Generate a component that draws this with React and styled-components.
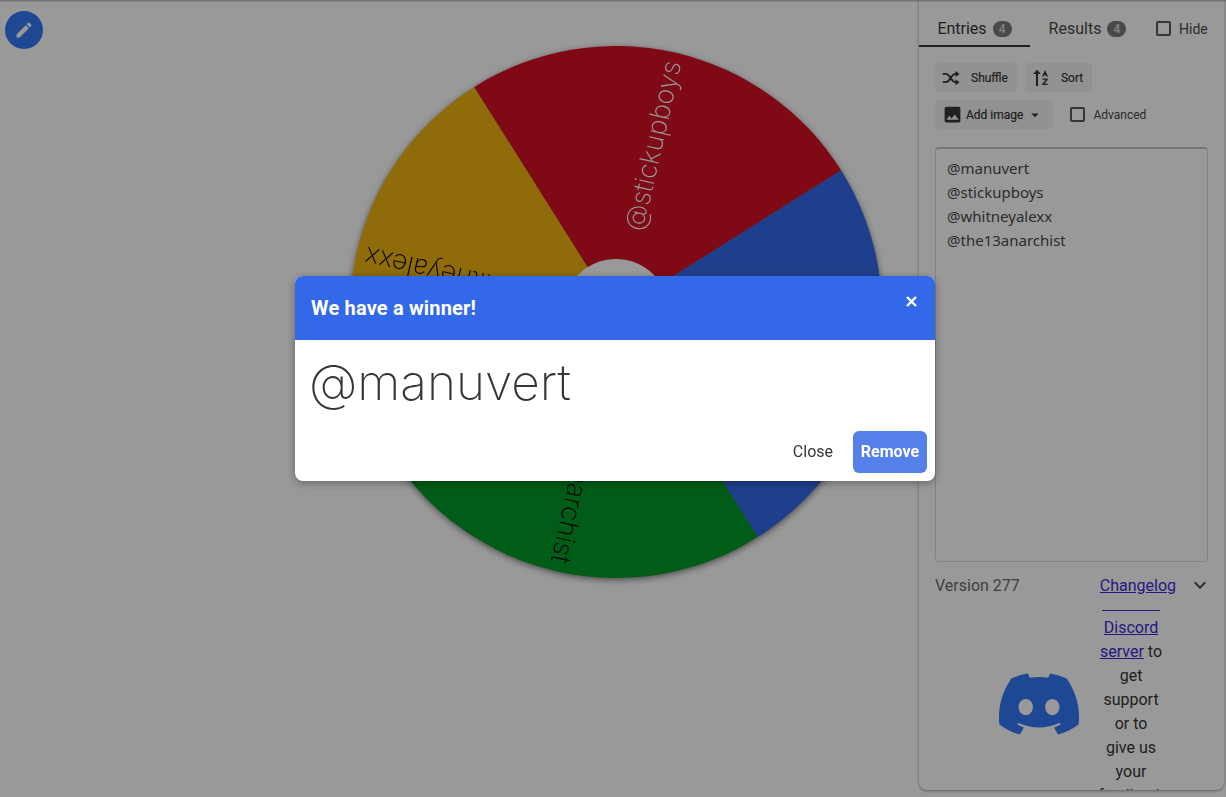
import React from 'react';
import styled, { createGlobalStyle } from 'styled-components';
import { MdArrowDropDown, MdEdit, MdExpandMore, MdImage } from 'react-icons/md';
import { SiDiscord } from 'react-icons/si';

const GlobalStyle = createGlobalStyle`
  html, body {
    margin: 0;
    height: 100%;
    overflow: hidden;
    background: #fff;
    font-family: Roboto, "Liberation Sans", sans-serif;
    color: #363636;
  }
`;

const Page = styled.div`
  display: flex;
  width: 1226px;
  height: 797px;
  overflow: hidden;
  box-shadow: inset 0 2px 2px -1px rgba(0, 0, 0, 0.35);
`;

const WheelArea = styled.main`
  display: flex;
  align-items: flex-start;
  width: 919px;
  padding: 11px 0 0 5px;
  box-sizing: border-box;
`;

const EditButton = styled.button`
  display: flex;
  align-items: center;
  justify-content: center;
  width: 38px;
  height: 38px;
  padding: 0;
  border: 0;
  border-radius: 50%;
  background: #3378f5;
  color: #fff;
  font-size: 20px;
`;

const WheelSvg = styled.svg`
  display: block;
  margin: 35px 0 0 307px;
  overflow: visible;
  filter: drop-shadow(0 2px 3px rgba(0, 0, 0, 0.5));
`;

const SliceLabel = styled.text`
  font-family: Inter, Lato, sans-serif;
  font-weight: 200;
  font-size: 27px;
`;

const Sidebar = styled.aside`
  display: flex;
  flex-direction: column;
  width: 305px;
  height: 790px;
  box-sizing: border-box;
  overflow: hidden;
  border-radius: 0 0 8px 8px;
  box-shadow: 0 1px 3px rgba(0, 0, 0, 0.4);
  > * {
    flex: none;
  }
`;

const TabRow = styled.div`
  display: flex;
  align-items: stretch;
  height: 47px;
  padding-top: 12px;
  box-sizing: border-box;
`;

const Tab = styled.div`
  display: flex;
  align-items: center;
  justify-content: center;
  gap: 6px;
  width: ${p => p.$width}px;
  font-size: 16px;
  box-sizing: border-box;
  color: ${p => (p.$active ? '#363636' : '#4a4a4a')};
  border-bottom: 2px solid ${p => (p.$active ? '#363636' : 'transparent')};
`;

const Count = styled.span`
  display: flex;
  align-items: center;
  justify-content: center;
  width: 19px;
  height: 16px;
  border-radius: 8px;
  background: #7a7a7a;
  color: #dbdbdb;
  font-size: 12px;
  font-weight: 500;
`;

const CheckBox = styled.span`
  display: block;
  width: 11px;
  height: 11px;
  border: 2px solid #5a5a5a;
  border-radius: 2px;
`;

const HideToggle = styled.label`
  display: flex;
  align-items: center;
  gap: 8px;
  margin-left: 11px;
  padding-bottom: 2px;
  font-size: 14px;
  color: #4a4a4a;
`;

const Controls = styled.div`
  display: flex;
  flex-direction: column;
  gap: 8px;
  padding: 16px 16px 0;
`;

const ControlRow = styled.div`
  display: flex;
  align-items: center;
  gap: 8px;
`;

const ToolButton = styled.button`
  display: flex;
  align-items: center;
  gap: ${p => p.$gap || 10}px;
  height: 29px;
  padding: 0 ${p => p.$padRight || 8}px 0 7px;
  border: 0;
  border-radius: 4px;
  background: #f3f3f3;
  font-family: inherit;
  font-size: 12px;
  font-weight: 400;
  -webkit-text-stroke: 0.2px #363636;
  color: #363636;
  svg {
    flex: none;
  }
`;

const AdvancedToggle = styled.label`
  display: flex;
  align-items: center;
  gap: 8px;
  margin-left: 9px;
  font-size: 12px;
  color: #4a4a4a;
`;

const EntryBox = styled.div`
  height: 415px;
  margin: 18px 16px 0;
  padding: 7px 11px;
  box-sizing: border-box;
  border: 1px solid #dbdbdb;
  border-top: 2px solid #c4c4c4;
  border-radius: 4px;
  font-family: "Noto Sans", "Open Sans", sans-serif;
  font-size: 15px;
  line-height: 24px;
  color: #4a4a4a;
`;

const VersionRow = styled.div`
  display: flex;
  align-items: center;
  height: 24px;
  margin-top: 11px;
  padding: 0 16px;
  font-size: 16px;
  color: #6b6b6b;
`;

const VersionText = styled.span`
  flex: 1;
`;

const Link = styled.a`
  color: #3c2bd6;
  text-decoration: underline;
`;

const Chevron = styled.span`
  display: flex;
  margin-left: 12px;
  margin-right: -4px;
  font-size: 24px;
  color: #4a4a4a;
`;

const DiscordBlock = styled.div`
  display: flex;
  align-items: flex-start;
  margin-top: 13px;
  padding-left: 80px;
`;

const DiscordIcon = styled.span`
  display: flex;
  flex: none;
  width: 80px;
  height: 80px;
  margin-top: 54px;
  color: #3378f5;
  font-size: 80px;
`;

const DiscordColumn = styled.div`
  display: flex;
  flex-direction: column;
  align-items: center;
  width: 64px;
  margin-left: 20px;
`;

const Divider = styled.div`
  width: 58px;
  margin-bottom: 5px;
  border-top: 1px solid #3c2bd6;
`;

const DiscordText = styled.div`
  font-size: 16px;
  line-height: 24px;
  text-align: center;
`;

const Overlay = styled.div`
  position: fixed;
  inset: 0;
  display: flex;
  justify-content: center;
  align-items: flex-start;
  padding: 276px 0 0 4px;
  box-sizing: border-box;
  background: rgba(0, 0, 0, 0.4);
`;

const Dialog = styled.section`
  width: 640px;
  height: 205px;
  display: flex;
  flex-direction: column;
  overflow: hidden;
  border-radius: 8px;
  background: #fff;
  box-shadow: 0 2px 8px rgba(0, 0, 0, 0.35);
`;

const DialogHead = styled.header`
  display: flex;
  justify-content: space-between;
  height: 64px;
  padding: 0 18px 0 16px;
  box-sizing: border-box;
  background: #3369e8;
  color: #fff;
`;

const DialogTitle = styled.h2`
  margin: 0;
  font-size: 20px;
  font-weight: 700;
  letter-spacing: 0.18px;
  line-height: 64px;
`;

const CloseIcon = styled.svg`
  display: block;
  margin-top: 20px;
`;

const WinnerName = styled.div`
  flex: 1;
  padding: 13px 14px 0;
  font-family: Inter, Lato, sans-serif;
  font-weight: 200;
  font-size: 49.5px;
  line-height: 58px;
  color: #363636;
`;

const DialogFoot = styled.footer`
  display: flex;
  justify-content: flex-end;
  align-items: center;
  gap: 20px;
  padding: 0 8px 8px;
`;

const PlainAction = styled.span`
  padding-bottom: 2px;
  font-size: 16px;
  color: #363636;
`;

const RemoveButton = styled.button`
  width: 74px;
  height: 42px;
  padding: 0 0 2px;
  border: 0;
  border-radius: 6px;
  background: #5580ea;
  color: #fff;
  font-family: inherit;
  font-size: 16px;
  font-weight: 700;
`;

const CX = 266;
const CY = 266;
const R = 266;

const slices = [
  { name: '@manuvert', color: '#3369e8', ink: '#fff', from: -32.2, to: 57.8 },
  { name: '@the13anarchist', color: '#009925', ink: '#000', from: 57.8, to: 147.8 },
  { name: '@whitneyalexx', color: '#eeb211', ink: '#000', from: 147.8, to: 237.8 },
  { name: '@stickupboys', color: '#d50f25', ink: '#fff', from: 237.8, to: 327.8 },
];

const point = deg => {
  const rad = (deg * Math.PI) / 180;
  return `${CX + R * Math.cos(rad)} ${CY + R * Math.sin(rad)}`;
};

const ShuffleIcon = () => (
  <svg width="18" height="18" viewBox="0 0 24 24" fill="currentColor">
    <path
      d="M1 6.5h4c6 0 7 11 13 11h1M1 17.5h4c6 0 7-11 13-11h1"
      fill="none"
      stroke="currentColor"
      strokeWidth="2.6"
    />
    <path d="M18 2.5l5.5 4-5.5 4zM18 13.5l5.5 4-5.5 4z" />
  </svg>
);

const SortIcon = () => (
  <svg width="18" height="18" viewBox="0 0 18 18" fill="currentColor">
    <path d="M4 17V5H1.2L5 .8 8.8 5H6v12z" />
    <path d="M13 1l3 6.5h-1.6l-.5-1.2h-1.8l-.5 1.2H10z" />
    <path d="M10.3 9.5h5.4v1.3l-3.4 3.9h3.4V16h-5.4v-1.3l3.4-3.9h-3.4z" />
  </svg>
);

export default function App() {
  return (
    <Page>
      <GlobalStyle />
      <WheelArea>
        <EditButton aria-label="Edit">
          <MdEdit />
        </EditButton>
        <WheelSvg width="532" height="532" viewBox="0 0 532 532">
          {slices.map(s => (
            <path
              key={s.name}
              d={`M${CX} ${CY} L${point(s.from)} A${R} ${R} 0 0 1 ${point(s.to)} Z`}
              fill={s.color}
            />
          ))}
          {slices.map(s => (
            <SliceLabel
              key={s.name}
              x={257}
              y={-1}
              fill={s.ink}
              textAnchor="end"
              dominantBaseline="central"
              transform={`translate(${CX} ${CY}) rotate(${(s.from + s.to) / 2})`}
            >
              {s.name}
            </SliceLabel>
          ))}
          <circle cx={CX} cy={CY} r={53} fill="#fff" />
        </WheelSvg>
      </WheelArea>
      <Sidebar>
        <TabRow>
          <Tab $active $width={111}>
            Entries <Count>4</Count>
          </Tab>
          <Tab $width={115}>
            Results <Count>4</Count>
          </Tab>
          <HideToggle>
            <CheckBox /> Hide
          </HideToggle>
        </TabRow>
        <Controls>
          <ControlRow>
            <ToolButton $gap={11} $padRight={9}>
              <ShuffleIcon /> Shuffle
            </ToolButton>
            <ToolButton $gap={11} $padRight={9}>
              <SortIcon /> Sort
            </ToolButton>
          </ControlRow>
          <ControlRow>
            <ToolButton $gap={3} $padRight={9}>
              <MdImage size={21} /> Add image <MdArrowDropDown size={18} />
            </ToolButton>
            <AdvancedToggle>
              <CheckBox /> Advanced
            </AdvancedToggle>
          </ControlRow>
        </Controls>
        <EntryBox>
          <div>@manuvert</div>
          <div>@stickupboys</div>
          <div>@whitneyalexx</div>
          <div>@the13anarchist</div>
        </EntryBox>
        <VersionRow>
          <VersionText>Version 277</VersionText>
          <Link>Changelog</Link>
          <Chevron>
            <MdExpandMore />
          </Chevron>
        </VersionRow>
        <DiscordBlock>
          <DiscordIcon>
            <SiDiscord />
          </DiscordIcon>
          <DiscordColumn>
            <Divider />
            <DiscordText>
              <Link>Discord server</Link> to get support or to give us your feedback
            </DiscordText>
          </DiscordColumn>
        </DiscordBlock>
      </Sidebar>
      <Overlay>
        <Dialog>
          <DialogHead>
            <DialogTitle>We have a winner!</DialogTitle>
            <CloseIcon width="11" height="11" viewBox="0 0 11 11" fill="none" stroke="#fff" strokeWidth="2.4">
              <path d="M1 1l9 9M10 1l-9 9" />
            </CloseIcon>
          </DialogHead>
          <WinnerName>@manuvert</WinnerName>
          <DialogFoot>
            <PlainAction>Close</PlainAction>
            <RemoveButton>Remove</RemoveButton>
          </DialogFoot>
        </Dialog>
      </Overlay>
    </Page>
  );
}
